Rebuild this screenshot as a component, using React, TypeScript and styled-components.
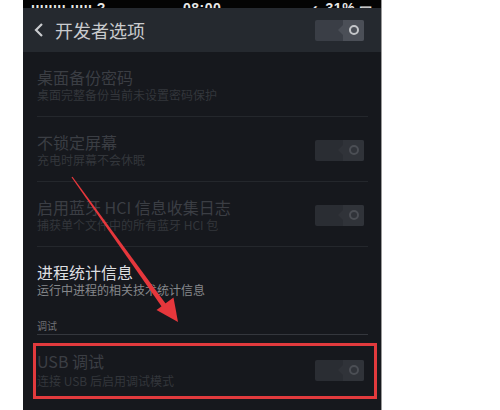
import React from "react";
import styled, { createGlobalStyle } from "styled-components";

const Global = createGlobalStyle`
  html, body { margin: 0; padding: 0; background: #ffffff; }
  body { font-family: "Noto Sans CJK SC", "Noto Sans", sans-serif; }
`;

const Page = styled.div`
  position: relative;
  width: 500px;
  height: 410px;
  overflow: hidden;
  background: #ffffff;
`;

const Phone = styled.div`
  margin-left: 23px;
  width: 358px;
  height: 410px;
  background: #16181d;
  border-right: 1px solid #9a9a9a;
  display: flex;
  flex-direction: column;
`;

const StatusBar = styled.div`
  height: 8px;
  background: #040404;
  overflow: hidden;
  display: flex;
  justify-content: space-between;
  align-items: flex-end;
  padding: 0 8px 0 8px;
  color: #e8e8e8;
  font-family: "Liberation Sans", sans-serif;
  font-size: 14px;
  font-weight: bold;
  line-height: 14px;
`;

const StatusText = styled.span<{ $shift?: number }>`
  margin-bottom: -7px;
  margin-left: ${(p) => p.$shift ?? 0}px;
  letter-spacing: 0.5px;
`;

const Header = styled.div`
  height: 44px;
  background: #25292f;
  display: flex;
  align-items: center;
  padding: 0 17px 0 11px;
`;

const Back = styled.svg`
  width: 10px;
  height: 14px;
  margin-right: 11px;
`;

const Title = styled.div`
  flex: 1;
  color: #c9cbce;
  font-size: 18px;
  line-height: 24px;
`;

const List = styled.div`
  display: flex;
  flex-direction: column;
`;

const Row = styled.div`
  display: flex;
  align-items: center;
  padding: 15px 17px 13px 14px;
`;

const Texts = styled.div`
  flex: 1;
  display: flex;
  flex-direction: column;
`;

const ItemTitle = styled.div<{ $on?: boolean }>`
  font-size: 16px;
  line-height: 20px;
  color: ${(p) => (p.$on ? "#dedfe1" : "#3b3e44")};
`;

const ItemSub = styled.div<{ $on?: boolean; $gap?: number }>`
  font-size: 12px;
  line-height: 16px;
  margin-top: ${(p) => p.$gap ?? 0}px;
  color: ${(p) => (p.$on ? "#86888c" : "#33363b")};
`;

const Divider = styled.div<{ $light?: boolean }>`
  height: 1px;
  margin: 0 13px 0 14px;
  background: ${(p) => (p.$light ? "#34373d" : "#24272c")};
`;

const Section = styled.div`
  padding: 8px 14px 1px;
  font-size: 10px;
  line-height: 14px;
  color: #707277;
`;

const Highlight = styled.div`
  margin: 8px 4px 0 10px;
  border: 3px solid #e23a3d;
  display: flex;
  align-items: center;
  padding: 5px 10px 7px 1px;
`;

const ToggleBox = styled.div<{ $bright?: boolean }>`
  width: 49px;
  height: 21px;
  border-radius: 2px;
  overflow: hidden;
  display: flex;
  background: ${(p) => (p.$bright ? "#3a3e46" : "#2a2d33")};
`;

const Track = styled.div`
  flex: 1;
`;

const Thumb = styled.div<{ $bright?: boolean }>`
  position: relative;
  width: 21px;
  display: flex;
  align-items: center;
  justify-content: center;
  background: ${(p) => (p.$bright ? "#4b4f57" : "#303339")};
  &::before {
    content: "";
    position: absolute;
    left: -5px;
    top: 5px;
    border-top: 5px solid transparent;
    border-bottom: 5px solid transparent;
    border-right: 5px solid ${(p) => (p.$bright ? "#4b4f57" : "#303339")};
  }
`;

const Ring = styled.div<{ $bright?: boolean }>`
  width: 6px;
  height: 6px;
  border-radius: 50%;
  border: 2px solid ${(p) => (p.$bright ? "#c4c6c9" : "#4b4e54")};
`;

const Overlay = styled.svg`
  position: absolute;
  left: 0;
  top: 0;
  pointer-events: none;
`;

function Toggle({ bright }: { bright?: boolean }) {
  return (
    <ToggleBox $bright={bright}>
      <Track />
      <Thumb $bright={bright}>
        <Ring $bright={bright} />
      </Thumb>
    </ToggleBox>
  );
}

export default function App() {
  return (
    <Page>
      <Global />
      <Phone>
        <StatusBar>
          <StatusText>ıııııııı ııııı ?</StatusText>
          <StatusText $shift={-14}>08:00</StatusText>
          <StatusText>◐ 31% ▭</StatusText>
        </StatusBar>
        <Header>
          <Back viewBox="0 0 10 14">
            <path d="M8 1 L2 7 L8 13" stroke="#c9cbce" strokeWidth="2.2" fill="none" />
          </Back>
          <Title>开发者选项</Title>
          <Toggle bright />
        </Header>
        <List>
          <Row>
            <Texts>
              <ItemTitle>桌面备份密码</ItemTitle>
              <ItemSub>桌面完整备份当前未设置密码保护</ItemSub>
            </Texts>
          </Row>
          <Divider />
          <Row>
            <Texts>
              <ItemTitle>不锁定屏幕</ItemTitle>
              <ItemSub>充电时屏幕不会休眠</ItemSub>
            </Texts>
            <Toggle />
          </Row>
          <Divider />
          <Row>
            <Texts>
              <ItemTitle>启用蓝牙 HCI 信息收集日志</ItemTitle>
              <ItemSub>捕获单个文件中的所有蓝牙 HCI 包</ItemSub>
            </Texts>
            <Toggle />
          </Row>
          <Divider />
          <Row>
            <Texts>
              <ItemTitle $on>进程统计信息</ItemTitle>
              <ItemSub $on>运行中进程的相关技术统计信息</ItemSub>
            </Texts>
          </Row>
          <Section>调试</Section>
          <Divider $light />
          <Highlight>
            <Texts>
              <ItemTitle>USB 调试</ItemTitle>
              <ItemSub $gap={2}>连接 USB 后启用调试模式</ItemSub>
            </Texts>
            <Toggle />
          </Highlight>
        </List>
      </Phone>
      <Overlay width="500" height="410" viewBox="0 0 500 410">
        <polygon points="71.5,177.3 72.5,176.7 167,305.5 163,308.5" fill="#e6373c" />
        <polygon points="178,322 156.5,310 173.5,297.5" fill="#e6373c" />
      </Overlay>
    </Page>
  );
}
